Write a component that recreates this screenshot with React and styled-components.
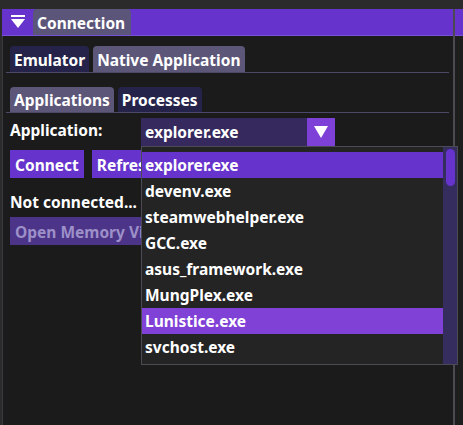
import React from "react";
import styled, { createGlobalStyle, css } from "styled-components";

const Global = createGlobalStyle`
  html, body { margin: 0; padding: 0; background: #2b2b2b; }
  body { font-family: "Noto Sans", "Open Sans", sans-serif; font-weight: 700; font-size: 15.5px; color: #ffffff; }
  * { box-sizing: border-box; }
`;

const Screen = styled.div`
  width: 463px;
  height: 425px;
  overflow: hidden;
  background: #2b2b2b;
  display: flex;
  flex-direction: column;
`;

const TopStrip = styled.div`
  height: 9px;
  flex: none;
`;

const Desk = styled.div`
  flex: 1;
  display: flex;
  padding-left: 2px;
`;

const Window = styled.div`
  width: 453px;
  display: flex;
  flex-direction: column;
  border-right: 2px solid #4a4a50;
`;

const TitleBar = styled.div`
  height: 27px;
  flex: none;
  display: flex;
  align-items: flex-end;
  background: #6633cc;
  border-bottom: 1px solid #7552d4;
`;

const CollapseBtn = styled.div`
  width: 31px;
  height: 26px;
  display: flex;
  align-items: center;
  justify-content: center;
  align-self: stretch;
`;

const TitleTab = styled.div`
  height: 26px;
  width: 98px;
  padding-left: 4px;
  background: #5b5579;
  border-radius: 4px 4px 0 0;
  line-height: 28px;
  white-space: nowrap;
  overflow: hidden;
`;

const Body = styled.div`
  flex: 1;
  background: #1b1b1b;
  border-left: 1px solid #3a3a3e;
  padding: 10px 8px 0 7px;
  display: flex;
  flex-direction: column;
`;

const TabBar = styled.div`
  display: flex;
  gap: 4px;
  margin: ${(p) => p.$top || 0}px -4px 0;
  padding: 0 4px;
  border-bottom: 1px solid #4c4868;
`;

const Tab = styled.div`
  height: ${(p) => p.$h}px;
  padding: 0 4px;
  border-radius: 4px 4px 0 0;
  line-height: ${(p) => p.$lh}px;
  white-space: nowrap;
  overflow: hidden;
  background: ${(p) => (p.$active ? "#5c5679" : "#25234a")};
`;

const Row = styled.div`
  display: flex;
  align-items: flex-start;
  margin-top: 5px;
  height: 28px;
`;

const Label = styled.div`
  width: 131px;
  line-height: 20px;
  margin-top: 2px;
`;

const ComboWrap = styled.div`
  position: relative;
`;

const Combo = styled.div`
  width: 194px;
  height: 28px;
  display: flex;
  background: #35295d;
`;

const ComboText = styled.div`
  flex: 1;
  padding-left: 4px;
  line-height: 29px;
`;

const ArrowBtn = styled.div`
  width: 28px;
  height: 28px;
  background: #7d41d8;
  display: flex;
  align-items: center;
  justify-content: center;
`;

const Popup = styled.div`
  position: absolute;
  top: 100%;
  left: 0;
  width: 317px;
  height: 219px;
  background: #242424;
  border: 1px solid #4b4b55;
  display: flex;
  z-index: 5;
`;

const List = styled.div`
  flex: 1;
  padding-top: 5px;
`;

const Item = styled.div`
  height: 26px;
  line-height: 26px;
  padding-left: 3px;
  white-space: nowrap;
  ${(p) =>
    p.$state === "selected" &&
    css`
      background: #6633cc;
    `}
  ${(p) =>
    p.$state === "hover" &&
    css`
      background: #8041d7;
    `}
`;

const ScrollTrack = styled.div`
  width: 14px;
  background: #352d5e;
  padding: 2px 2px 0 3px;
`;

const ScrollGrab = styled.div`
  height: 37px;
  border-radius: 5px;
  background: #6633cc;
`;

const ButtonRow = styled.div`
  display: flex;
  gap: 8px;
  margin-top: 4px;
`;

const Button = styled.div`
  height: 28px;
  padding: 0 5px;
  line-height: 30px;
  white-space: nowrap;
  overflow: hidden;
  align-self: flex-start;
  background: ${(p) => (p.$disabled ? "#4c3489" : "#6633cc")};
  color: ${(p) => (p.$disabled ? "#9d8fc8" : "#ffffff")};
`;

const Status = styled.div`
  margin-top: 14px;
  line-height: 20px;
  margin-bottom: 5px;
`;

const SidePane = styled.div`
  flex: 1;
  display: flex;
  flex-direction: column;
  background: #1e1e1e;
`;

const SideTitle = styled.div`
  height: 27px;
  background: #6633cc;
  border-bottom: 1px solid #7552d4;
`;

const apps = [
  "explorer.exe",
  "devenv.exe",
  "steamwebhelper.exe",
  "GCC.exe",
  "asus_framework.exe",
  "MungPlex.exe",
  "Lunistice.exe",
  "svchost.exe",
];

export default function App() {
  return (
    <Screen>
      <Global />
      <TopStrip />
      <Desk>
        <Window>
          <TitleBar>
            <CollapseBtn>
              <svg width="14" height="14" viewBox="0 0 14 14">
                <rect x="0" y="0" width="14" height="2" fill="#fff" />
                <polygon points="0,4 14,4 7,13" fill="#fff" />
              </svg>
            </CollapseBtn>
            <TitleTab>Connection</TitleTab>
          </TitleBar>
          <Body>
            <TabBar>
              <Tab $h={26} $lh={28}>Emulator</Tab>
              <Tab $h={26} $lh={28} $active>
                Native Application
              </Tab>
            </TabBar>
            <TabBar $top={14}>
              <Tab $h={25} $lh={26} $active>
                Applications
              </Tab>
              <Tab $h={25} $lh={26}>Processes</Tab>
            </TabBar>
            <Row>
              <Label>Application:</Label>
              <ComboWrap>
                <Combo>
                  <ComboText>explorer.exe</ComboText>
                  <ArrowBtn>
                    <svg width="14" height="12" viewBox="0 0 14 12">
                      <polygon points="0,0 14,0 7,12" fill="#fff" />
                    </svg>
                  </ArrowBtn>
                </Combo>
                <Popup>
                  <List>
                    {apps.map((a, i) => (
                      <Item
                        key={a}
                        $state={i === 0 ? "selected" : i === 6 ? "hover" : undefined}
                      >
                        {a}
                      </Item>
                    ))}
                  </List>
                  <ScrollTrack>
                    <ScrollGrab />
                  </ScrollTrack>
                </Popup>
              </ComboWrap>
            </Row>
            <ButtonRow>
              <Button>Connect</Button>
              <Button>Refresh</Button>
            </ButtonRow>
            <Status>Not connected...</Status>
            <Button $disabled>Open Memory Viewer</Button>
          </Body>
        </Window>
        <SidePane>
          <SideTitle />
        </SidePane>
      </Desk>
    </Screen>
  );
}
